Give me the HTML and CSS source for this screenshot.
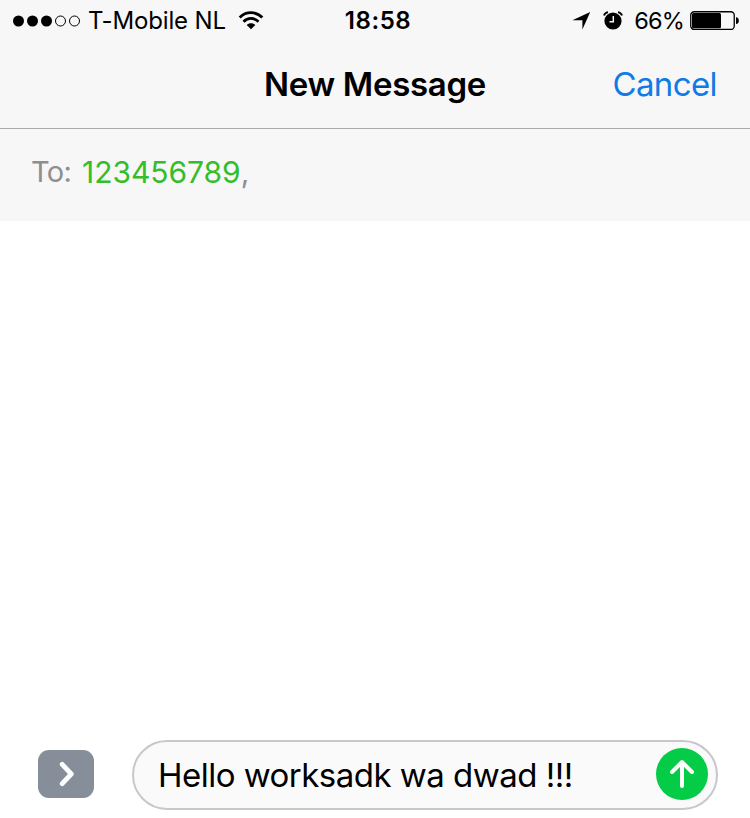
FILE: index.html
```html
<!DOCTYPE html>
<html lang="en">
<head>
<meta charset="utf-8">
<title>New Message</title>
<link rel="stylesheet" href="styles.css">
</head>
<body>
<main class="screen">
  <div class="status">
    <div class="status-left">
      <svg class="signal" width="68" height="12" viewBox="0 0 68 12">
        <circle cx="5.5" cy="6" r="5.5"/><circle cx="19.5" cy="6" r="5.5"/><circle cx="33.5" cy="6" r="5.5"/>
        <circle class="ring" cx="47.5" cy="6" r="5"/><circle class="ring" cx="61.5" cy="6" r="5"/>
      </svg>
      <span class="carrier">T-Mobile NL</span>
      <svg class="wifi" width="26" height="18" viewBox="0 0 26 18">
        <path class="arc" d="M1.7 5.5C8 -.9 18 -.9 24.3 5.5"/>
        <path class="arc" d="M5.5 9.7C9.8 5.3 16.2 5.3 20.5 9.7"/>
        <path d="M8.7 13C11 10.8 15 10.8 17.3 13L13 17.3Z"/>
      </svg>
    </div>
    <span class="clock">18:58</span>
    <div class="status-right">
      <svg class="location" width="19" height="18" viewBox="0 0 19 18"><path d="M18.2 0L10.4 17.6V8.2H.4Z"/></svg>
      <svg class="alarm" width="20" height="19" viewBox="0 0 20 19">
        <circle cx="10" cy="10" r="8.6"/>
        <path class="bell" d="M1 4.6C1.5 2.7 3 1.5 5 1.1M19 4.6C18.5 2.7 17 1.5 15 1.1"/>
        <path class="hands" d="M10.3 5V10.8H6.5"/>
      </svg>
      <span class="percent">66%</span>
      <svg class="battery" width="50" height="20" viewBox="0 0 50 20">
        <rect class="case" x=".75" y=".75" width="43.5" height="17.7" rx="3.5"/>
        <rect x="2" y="2" width="29" height="15.2" rx="1.5"/>
        <path d="M46 6.2C49.8 6.2 49.8 13 46 13Z"/>
      </svg>
    </div>
  </div>
  <header class="nav">
    <h1 class="title">New Message</h1>
    <span class="cancel">Cancel</span>
  </header>
  <div class="recipients"><span class="to">To:</span><span class="number">123456789</span><span class="comma">,</span></div>
  <section class="thread"></section>
  <footer class="composer">
    <div class="expand">
      <svg width="16" height="26" viewBox="0 0 16 26"><path d="M3.2 3.3L12.3 13L3.2 22.7"/></svg>
    </div>
    <div class="field">
      <span class="message">Hello worksadk wa dwad !!!</span>
      <div class="send">
        <svg width="26" height="30" viewBox="0 0 26 30"><path d="M13 27V3M3 13L13 3L23 13"/></svg>
      </div>
    </div>
  </footer>
</main>
</body>
</html>
```

FILE: styles.css
```css
body {
  margin: 0;
  background: #fff;
  color: #000;
  font-family: Inter, "Liberation Sans", sans-serif;
}
svg { display: block; flex: none; overflow: visible; }
.screen {
  display: flex;
  flex-direction: column;
  width: 750px;
  height: 818px;
  overflow: hidden;
}
.status {
  display: grid;
  grid-template-columns: 1fr auto 1fr;
  align-items: center;
  height: 41px;
  background: #f7f7f7;
  font-size: 24px;
  line-height: 41px;
  white-space: nowrap;
}
.status-left, .status-right { display: flex; align-items: center; }
.status-left { padding-left: 13px; }
.status-right { justify-content: flex-end; padding-right: 10px; }
.carrier { margin-left: 7px; letter-spacing: -0.15px; }
.wifi { margin-left: 12px; }
.arc { fill: none; stroke: #000; stroke-width: 2.8; }
.ring { fill: none; stroke: #000; stroke-width: 1; }
.clock { margin-left: 6px; font-weight: 600; letter-spacing: 0.6px; }
.location { margin-right: 12px; }
.alarm { margin-right: 11px; }
.bell { fill: none; stroke: #000; stroke-width: 1.8; }
.hands { fill: none; stroke: #f7f7f7; stroke-width: 1.5; }
.percent { font-size: 23.5px; letter-spacing: -0.8px; }
.battery { margin-left: 6px; }
.case { fill: none; stroke: #000; stroke-width: 1.3; }
.nav {
  display: grid;
  grid-template-columns: 1fr auto 1fr;
  height: 87px;
  background: #f7f7f7;
  border-bottom: 1px solid #ababad;
  font-size: 33px;
  line-height: 86px;
}
.title { grid-column: 2; margin: 0; font-size: 33px; font-weight: 600; letter-spacing: -0.3px; }
.cancel { justify-self: end; padding-right: 33px; color: #107be6; letter-spacing: -0.6px; }
.recipients {
  display: flex;
  height: 92px;
  padding-left: 31px;
  background: #f7f7f7;
  color: #8e8e93;
  font-size: 30px;
  line-height: 87px;
}
.to { font-size: 29px; line-height: 86px; letter-spacing: -0.7px; }
.number { margin-left: 11px; color: #35bd2b; letter-spacing: -0.05px; }
.thread { flex: 1; }
.composer {
  display: flex;
  align-items: center;
  height: 86px;
  padding: 0 32px 0 38px;
}
.expand {
  display: flex;
  align-items: center;
  justify-content: center;
  box-sizing: border-box;
  width: 56px;
  height: 48px;
  margin: 0 38px 2px 0;
  padding-left: 2px;
  border-radius: 11px;
  background: #858e99;
}
.expand svg { fill: none; stroke: #fff; stroke-width: 4.8; stroke-linecap: round; stroke-linejoin: round; }
.field {
  display: flex;
  flex: 1;
  align-items: center;
  justify-content: space-between;
  box-sizing: border-box;
  height: 70px;
  padding: 0 8px 0 24px;
  border: 2px solid #c7c7cc;
  border-radius: 35px;
  background: #fafafa;
}
.message { font-size: 33px; line-height: 66px; letter-spacing: -0.52px; white-space: nowrap; }
.send {
  display: flex;
  align-items: center;
  justify-content: center;
  width: 52px;
  height: 52px;
  margin-bottom: 2px;
  border-radius: 50%;
  background: #04cc46;
}
.send svg { fill: none; stroke: #fff; stroke-width: 4; stroke-linecap: round; stroke-linejoin: round; }
```
